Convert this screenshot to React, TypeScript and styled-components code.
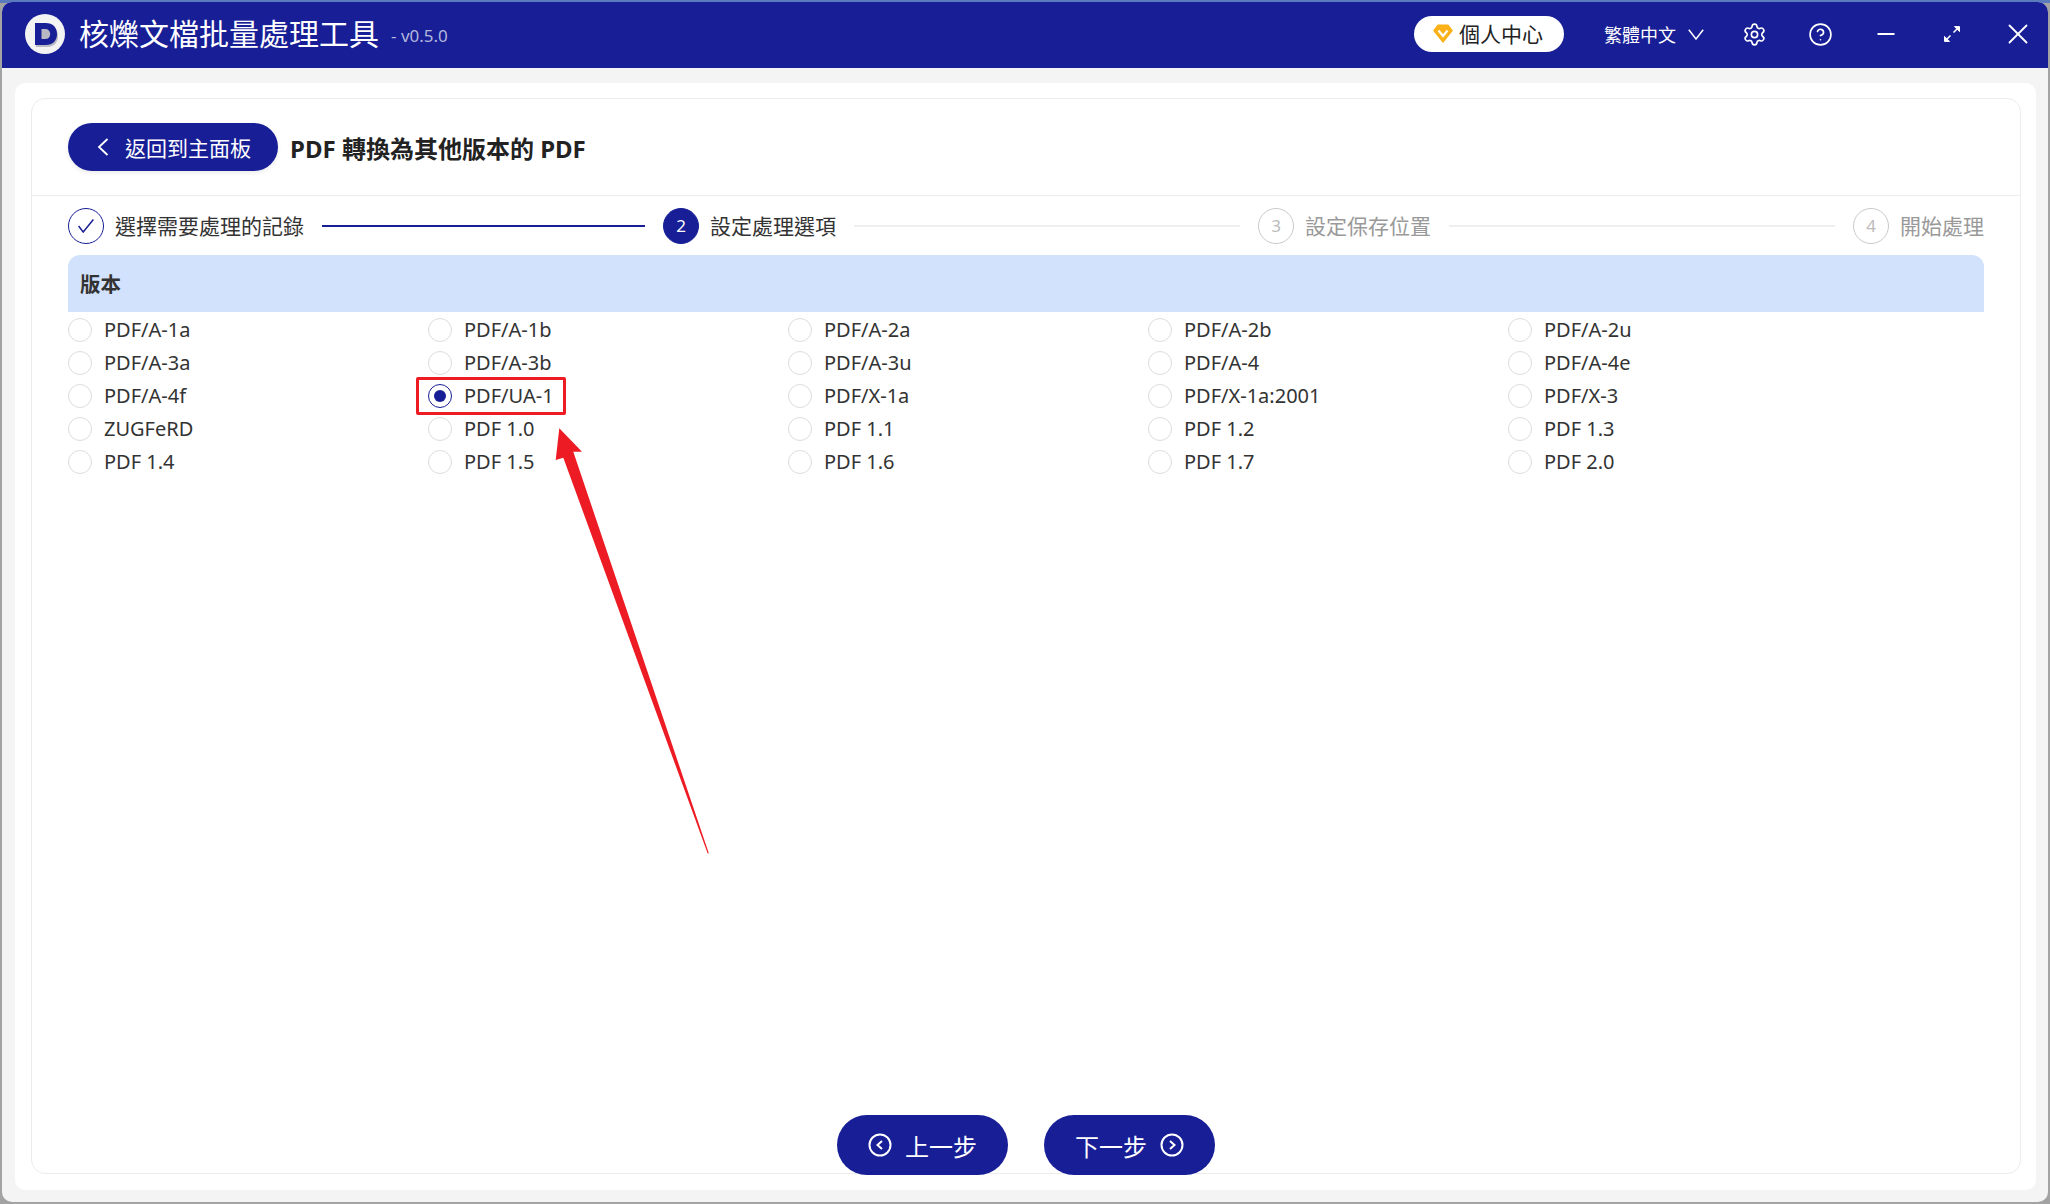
import styled, { createGlobalStyle } from "styled-components";
import { CircleHelp, Settings, X } from "lucide-react";

const NAVY = "#171e96";
const FONT = `"Noto Sans", "Noto Sans CJK TC", sans-serif`;

const versions = [
  "PDF/A-1a", "PDF/A-1b", "PDF/A-2a", "PDF/A-2b", "PDF/A-2u",
  "PDF/A-3a", "PDF/A-3b", "PDF/A-3u", "PDF/A-4", "PDF/A-4e",
  "PDF/A-4f", "PDF/UA-1", "PDF/X-1a", "PDF/X-1a:2001", "PDF/X-3",
  "ZUGFeRD", "PDF 1.0", "PDF 1.1", "PDF 1.2", "PDF 1.3",
  "PDF 1.4", "PDF 1.5", "PDF 1.6", "PDF 1.7", "PDF 2.0",
];

const GlobalStyle = createGlobalStyle`
  html, body {
    margin: 0;
    padding: 0;
    background: #a3a3a3;
  }
  body {
    font-family: ${FONT};
  }
`;

const Desktop = styled.div`
  position: relative;
  width: 2050px;
  height: 1204px;
  padding: 2px;
  box-sizing: border-box;
  overflow: hidden;
  background: linear-gradient(#5b7cbc 0, #5b7cbc 3px, #a3a3a3 3px);
`;

const Window = styled.div`
  display: flex;
  flex-direction: column;
  height: 100%;
  border-radius: 10px;
  overflow: hidden;
  background: #f4f4f4;
`;

const TitleBar = styled.header`
  display: flex;
  align-items: center;
  flex: 0 0 66px;
  box-sizing: border-box;
  padding: 0 13px 2px 23px;
  background: ${NAVY};
  color: #fff;
`;

const AppName = styled.h1`
  margin: 0 0 0 14px;
  font-size: 30px;
  line-height: 40px;
  font-weight: 400;
`;

const Version = styled.span`
  margin: 2px 0 0 12px;
  font-size: 17px;
  color: #b4b7dc;
`;

const UserPill = styled.button`
  display: flex;
  align-items: center;
  gap: 6px;
  height: 36px;
  width: 150px;
  margin-left: auto;
  padding: 0 0 2px 19px;
  box-sizing: border-box;
  border: 0;
  border-radius: 18px;
  background: #fff;
  color: #222;
  font: 400 21px ${FONT};
`;

const LangPicker = styled.div`
  display: flex;
  align-items: center;
  gap: 12px;
  margin-left: 40px;
  font-size: 18px;
`;

const IconSlot = styled.span<{ $left: number }>`
  display: flex;
  align-items: center;
  margin-left: ${(p) => p.$left}px;
`;

const Content = styled.main`
  display: flex;
  flex: 1;
  margin: 15px 12px 12px 13px;
  padding: 15px 15px 16px 16px;
  border-radius: 10px;
  background: #fff;
  min-height: 0;
`;

const Card = styled.section`
  display: flex;
  flex-direction: column;
  flex: 1;
  border: 1px solid #ececec;
  border-radius: 14px;
`;

const CardHead = styled.div`
  display: flex;
  align-items: center;
  gap: 11px;
  height: 96px;
  padding: 0 36px;
  border-bottom: 1px solid #ececec;
`;

const BackButton = styled.button`
  display: flex;
  align-items: center;
  width: 210px;
  height: 48px;
  padding: 0 0 0 29px;
  box-sizing: border-box;
  border: 0;
  border-radius: 24px;
  background: ${NAVY};
  box-shadow: 0 2px 4px rgba(0, 0, 0, 0.08);
  color: #fff;
  font: 400 21px ${FONT};
  span {
    margin-left: 16px;
  }
`;

const PageTitle = styled.h2`
  margin: 0 0 0 1px;
  font-size: 24px;
  font-weight: 700;
  color: #222;
`;

const Steps = styled.ol`
  display: flex;
  align-items: center;
  height: 59px;
  margin: 0;
  padding: 0 36px;
  list-style: none;
`;

const Step = styled.li<{ $last?: boolean }>`
  display: flex;
  align-items: center;
  flex: ${(p) => (p.$last ? "0 0 auto" : "1 1 0")};
  margin-right: ${(p) => (p.$last ? 0 : 18)}px;
`;

const StepMark = styled.span<{ $state: "done" | "active" | "todo" }>`
  display: flex;
  align-items: center;
  justify-content: center;
  flex: 0 0 36px;
  height: 36px;
  box-sizing: border-box;
  border-radius: 50%;
  border: 1px solid ${(p) => (p.$state === "todo" ? "#c9c9c9" : NAVY)};
  background: ${(p) => (p.$state === "active" ? NAVY : "#fff")};
  color: ${(p) => (p.$state === "active" ? "#fff" : p.$state === "todo" ? "#bbb" : NAVY)};
  font-size: 17px;
`;

const StepLabel = styled.span<{ $muted?: boolean }>`
  margin: -1px 0 0 11px;
  font-size: 21px;
  white-space: nowrap;
  color: ${(p) => (p.$muted ? "#999" : "#333")};
`;

const StepLine = styled.span<{ $done?: boolean }>`
  flex: 1;
  height: 2px;
  margin-left: 18px;
  background: ${(p) => (p.$done ? NAVY : "#efefef")};
`;

const GroupTitle = styled.div`
  display: flex;
  align-items: center;
  height: 57px;
  margin: 0 36px;
  padding: 0 0 1px 12px;
  box-sizing: border-box;
  border-radius: 12px 12px 0 0;
  background: #d2e2fc;
  font-size: 20.5px;
  font-weight: 700;
  color: #333;
`;

const OptionGrid = styled.div`
  display: grid;
  grid-template-columns: repeat(5, 360px);
  grid-auto-rows: 33px;
  flex: 1;
  padding: 1px 36px 0;
  min-height: 0;
`;

const Option = styled.label`
  display: flex;
  align-items: center;
  gap: 12px;
  font-size: 20px;
  color: #333;
`;

const Radio = styled.span<{ $checked?: boolean }>`
  display: flex;
  align-items: center;
  justify-content: center;
  width: 24px;
  height: 24px;
  box-sizing: border-box;
  border-radius: 50%;
  border: 1px solid ${(p) => (p.$checked ? NAVY : "#dcdcdc")};
  &::after {
    content: "";
    display: ${(p) => (p.$checked ? "block" : "none")};
    width: 12px;
    height: 12px;
    border-radius: 50%;
    background: ${NAVY};
  }
`;

const Footer = styled.div`
  display: flex;
  justify-content: center;
  gap: 36px;
  margin-bottom: -2px;
`;

const NavButton = styled.button`
  display: flex;
  align-items: center;
  justify-content: center;
  gap: 13px;
  width: 171px;
  height: 60px;
  border: 0;
  border-radius: 30px;
  background: ${NAVY};
  color: #fff;
  font: 400 24px ${FONT};
`;

const Highlight = styled.div`
  position: absolute;
  left: 416px;
  top: 377px;
  width: 150px;
  height: 38px;
  box-sizing: border-box;
  border: 3px solid #ed1c24;
  border-radius: 2px;
  pointer-events: none;
`;

const ArrowOverlay = styled.svg`
  position: absolute;
  left: 0;
  top: 0;
  pointer-events: none;
`;

function LogoMark() {
  return (
    <svg width="40" height="40" viewBox="0 0 40 40">
      <circle cx="20" cy="20" r="20" fill="#f3f3f3" />
      <path
        fill="#b9b9c4"
        d="M11 11h10.5C29 11 33 15.6 33 22s-4 11-11.5 11H11z"
      />
      <path
        fillRule="evenodd"
        fill={NAVY}
        d="M10 9h10.5C28 9 32 13.6 32 20s-4 11-11.5 11H10V9zm6.5 6v10H20c3.4 0 5.2-2 5.2-5s-1.8-5-5.2-5h-3.5z"
      />
    </svg>
  );
}

function Diamond() {
  return (
    <svg width="20" height="19" viewBox="0 0 20 19">
      <path
        d="M5 1h10l4.2 5.6L10 18 .8 6.6z"
        fill="#fbb117"
        stroke="#fbb117"
        strokeWidth="1.2"
        strokeLinejoin="round"
      />
      <path d="M5.5 6.5l4.5 5.5 4.5-5.5" fill="none" stroke="#fff" strokeWidth="2.2" />
    </svg>
  );
}

function LangChevron() {
  return (
    <svg width="16" height="11" viewBox="0 0 16 11" fill="none" stroke="#fff" strokeWidth="1.5">
      <path d="M.8.8L8 10 15.2.8" />
    </svg>
  );
}

function BackChevron() {
  return (
    <svg width="12" height="18" viewBox="0 0 12 18" fill="none" stroke="#fff" strokeWidth="1.8">
      <path d="M10.5 1L2 9l8.5 8" />
    </svg>
  );
}

function DoneCheck() {
  return (
    <svg width="16" height="14" viewBox="0 0 16 14" fill="none" stroke={NAVY} strokeWidth="1.5">
      <path d="M.6 7l4.6 6L15.4.6" />
    </svg>
  );
}

function Minimize() {
  return (
    <svg width="18" height="18" viewBox="0 0 18 18">
      <path d="M0.5 9h17" stroke="#fff" strokeWidth="2" />
    </svg>
  );
}

function Expand() {
  return (
    <svg width="18" height="18" viewBox="0 0 18 18" fill="#fff" stroke="#fff" strokeWidth="1.6">
      <path d="M10.5 7.5l3.5-3.5" fill="none" />
      <path d="M11.5 1.6h5v5z" strokeWidth="1" />
      <path d="M7.5 10.5L4 14" fill="none" />
      <path d="M6.5 16.4h-5v-5z" strokeWidth="1" />
    </svg>
  );
}

function RoundArrow({ dir }: { dir: "left" | "right" }) {
  return (
    <svg width="24" height="24" viewBox="0 0 24 24" fill="none" stroke="#fff" strokeWidth="2">
      <circle cx="12" cy="12" r="10.5" />
      <path d={dir === "left" ? "M14 8l-4.5 4 4.5 4" : "M10 8l4.5 4-4.5 4"} />
    </svg>
  );
}

export default function App() {
  return (
    <>
      <GlobalStyle />
      <Desktop>
        <Window>
          <TitleBar>
            <LogoMark />
            <AppName>核爍文檔批量處理工具</AppName>
            <Version>- v0.5.0</Version>
            <UserPill>
              <Diamond />
              個人中心
            </UserPill>
            <LangPicker>
              繁體中文
              <LangChevron />
            </LangPicker>
            <IconSlot $left={38}>
              <Settings size={25} strokeWidth={1.6} />
            </IconSlot>
            <IconSlot $left={41}>
              <CircleHelp size={25} strokeWidth={1.6} />
            </IconSlot>
            <IconSlot $left={44}>
              <Minimize />
            </IconSlot>
            <IconSlot $left={48}>
              <Expand />
            </IconSlot>
            <IconSlot $left={40}>
              <X size={34} strokeWidth={1.3} />
            </IconSlot>
          </TitleBar>

          <Content>
            <Card>
              <CardHead>
                <BackButton>
                  <BackChevron />
                  <span>返回到主面板</span>
                </BackButton>
                <PageTitle>PDF 轉換為其他版本的 PDF</PageTitle>
              </CardHead>

              <Steps>
                <Step>
                  <StepMark $state="done">
                    <DoneCheck />
                  </StepMark>
                  <StepLabel>選擇需要處理的記錄</StepLabel>
                  <StepLine $done />
                </Step>
                <Step>
                  <StepMark $state="active">2</StepMark>
                  <StepLabel>設定處理選項</StepLabel>
                  <StepLine />
                </Step>
                <Step>
                  <StepMark $state="todo">3</StepMark>
                  <StepLabel $muted>設定保存位置</StepLabel>
                  <StepLine />
                </Step>
                <Step $last>
                  <StepMark $state="todo">4</StepMark>
                  <StepLabel $muted>開始處理</StepLabel>
                </Step>
              </Steps>

              <GroupTitle>版本</GroupTitle>
              <OptionGrid>
                {versions.map((name) => (
                  <Option key={name}>
                    <Radio $checked={name === "PDF/UA-1"} />
                    {name}
                  </Option>
                ))}
              </OptionGrid>

              <Footer>
                <NavButton>
                  <RoundArrow dir="left" />
                  上一步
                </NavButton>
                <NavButton>
                  下一步
                  <RoundArrow dir="right" />
                </NavButton>
              </Footer>
            </Card>
          </Content>
        </Window>

        <Highlight />
        <ArrowOverlay width="2050" height="1204" viewBox="0 0 2050 1204">
          <path
            fill="#ed1c24"
            d="M559.3 428.3L582 451.7 573.3 451.7 708.8 853.3 707.6 853.3 563.3 457.7 555.7 460z"
          />
        </ArrowOverlay>
      </Desktop>
    </>
  );
}
